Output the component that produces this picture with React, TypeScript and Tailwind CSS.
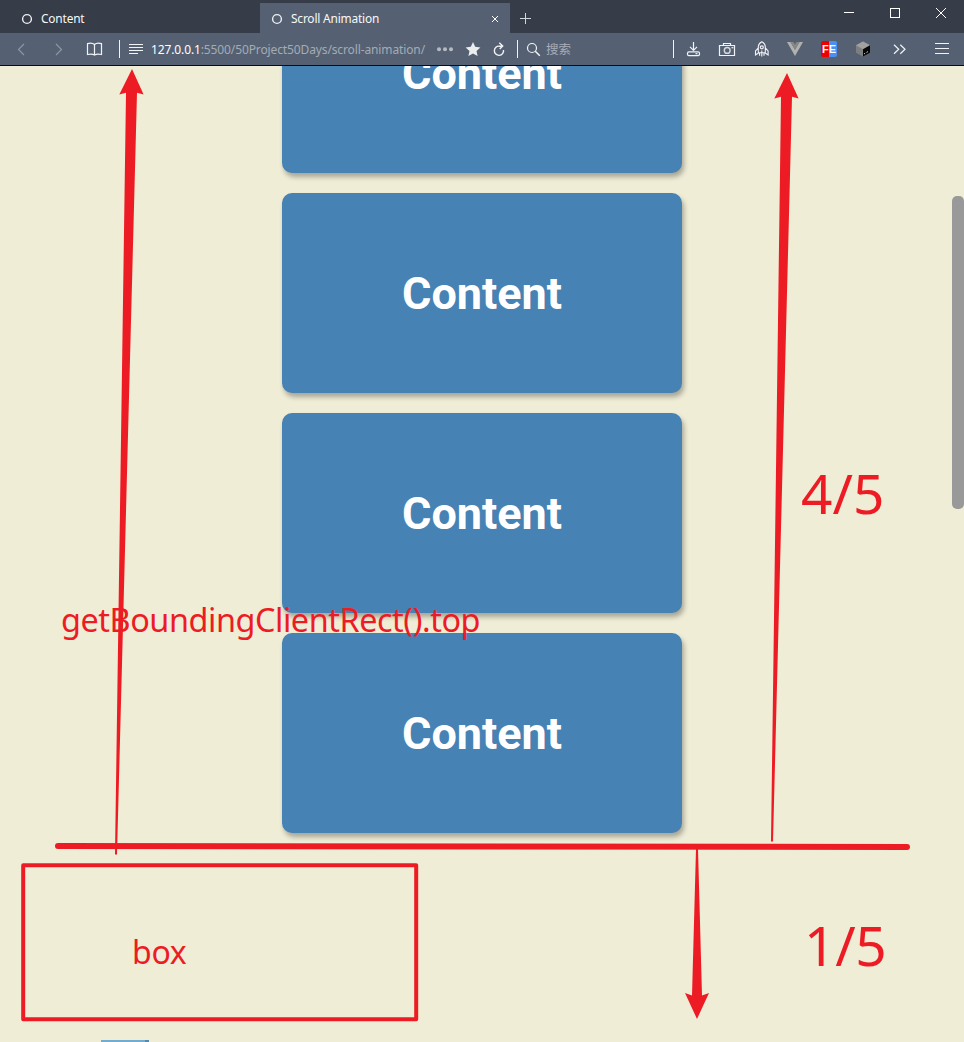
import React from "react";

const CARDS = ["Content", "Content", "Content", "Content"];

function Glyph({ w, className = "", children }: { w: number; className?: string; children: React.ReactNode }) {
  return (
    <svg
      width={w}
      height={32}
      viewBox={`0 0 ${w} 32`}
      fill="none"
      stroke="#f2f3f5"
      strokeWidth={1.2}
      className={`block shrink-0 ${className}`}
    >
      {children}
    </svg>
  );
}

function Ring() {
  return (
    <svg width={12} height={12} viewBox="0 0 12 12" className="block shrink-0">
      <circle cx={6} cy={6} r={4.4} fill="none" stroke="#eef0f2" strokeWidth={1.4} />
    </svg>
  );
}

function TabStrip() {
  return (
    <header className="flex h-[33px] shrink-0 bg-[#363c48] text-[11.9px] tracking-[-0.18px] text-[#f7f8f8]">
      <div className="mt-[3px] flex w-[260px] items-center gap-[8px] pt-[2px] pl-[21px]">
        <Ring />
        <span className="whitespace-nowrap">Content</span>
      </div>
      <div className="mt-[3px] flex w-[250px] items-center bg-[#556173] pt-[2px] pl-[11px]">
        <Ring />
        <span className="ml-[8px] whitespace-nowrap">Scroll Animation</span>
        <svg width={8} height={8} viewBox="0 0 8 8" className="mr-[11px] ml-auto block" stroke="#fff" strokeWidth={1}>
          <path d="M1 1 7 7M7 1 1 7" />
        </svg>
      </div>
      <svg width={32} height={33} viewBox="0 0 32 33" className="block" stroke="#d3d6da" strokeWidth={1}>
        <path d="M10 18.5H21M15.5 13V24" />
      </svg>
      <svg width={138} height={33} viewBox="0 0 138 33" className="ml-auto block" fill="none" stroke="#fff" strokeWidth={1}>
        <path d="M18 12.5H28" />
        <rect x={64.5} y={8.5} width={9} height={9} />
        <path d="m110 8 10 10M120 8l-10 10" />
      </svg>
    </header>
  );
}

function Toolbar() {
  return (
    <nav className="flex h-[33px] shrink-0 items-start border-b border-[#0c0c0d] bg-[#556173]">
      <Glyph w={40}>
        <path d="m24 11-5.5 5.5L24 22" stroke="#8e96a2" />
      </Glyph>
      <Glyph w={40}>
        <path d="m16 11 5.5 5.5L16 22" stroke="#8e96a2" />
      </Glyph>
      <Glyph w={45}>
        <path d="M14.5 22V11.5Q12 9.3 7.5 10.6V21.5Q12 20.5 14.5 22Q17 20.5 21.5 21.5V10.6Q17 9.3 14.5 11.5" />
        <path d="M39.5 7V25" strokeWidth={1} />
      </Glyph>
      <Glyph w={26}>
        <path d="M4 11.5H18M4 14.5H18M4 17.5H18M4 20.5H13" strokeWidth={1} />
      </Glyph>
      <div className="flex h-[32px] w-[282px] shrink-0 items-center pt-[2px] text-[12px] tracking-[-0.12px] whitespace-nowrap text-[#a4abb4]">
        <span>
          <span className="text-white">127.0.0.1</span>:5500/50Project50Days/scroll-animation/
        </span>
      </div>
      <Glyph w={27}>
        <g fill="#b5bac1" stroke="none">
          <circle cx={6} cy={16.3} r={2} />
          <circle cx={12} cy={16.3} r={2} />
          <circle cx={18} cy={16.3} r={2} />
        </g>
      </Glyph>
      <Glyph w={30}>
        <path
          d="m13 9 2.2 4.8 5.2.6-3.9 3.5 1.1 5.2-4.6-2.6-4.6 2.6 1.1-5.2-3.9-3.5 5.2-.6Z"
          fill="#eceded"
          stroke="none"
        />
      </Glyph>
      <Glyph w={32}>
        <path d="M12.5 13.2H9.5A4.6 4.6 0 1 0 13.5 17M9.3 9.7l3.4 3.4-3 3" strokeWidth={1.4} />
        <path d="M27.5 7V25" strokeWidth={1} />
      </Glyph>
      <Glyph w={24}>
        <circle cx={10} cy={15} r={4.5} />
        <path d="m13.3 18.3 4.5 4.5" strokeWidth={1.5} />
      </Glyph>
      <div className="flex h-[32px] w-[122px] shrink-0 items-center pt-[2px] text-[12.5px] text-[#a7adb7]">搜索</div>
      <Glyph w={14}>
        <path d="M5.5 7V25" strokeWidth={1} />
      </Glyph>
      <Glyph w={32}>
        <path d="M11.5 9V17M8 13.8l3.5 3.5 3.5-3.5" />
        <rect x={5.5} y={18.8} width={12} height={3.8} rx={1.4} />
        <path d="M13.5 20.7h2" />
      </Glyph>
      <Glyph w={36}>
        <path d="M5.5 12.5h15v10h-15ZM9.5 12V10.5h7V12" />
        <circle cx={13.2} cy={17.4} r={2.9} strokeWidth={1.4} stroke="#d5d9df" />
        <path d="M17.5 14.7h1.8" />
      </Glyph>
      <Glyph w={33}>
        <path d="M8.3 19.8V13.5q.2-2.8 3.5-4.7 3.3 1.9 3.5 4.7v6.3ZM8.3 14.8 5.5 18v4l3.3-2.2M15.3 14.8 18.1 18v4l-3.3-2.2M9.6 20v2.7M14 20v2.7M11.8 17.5v6" strokeWidth={1.1} />
        <circle cx={11.8} cy={14.3} r={1.5} />
      </Glyph>
      <Glyph w={36}>
        <path d="M4 9h3.5L12 16.7 16.5 9H20L12 23Z" fill="#b1b1b0" stroke="none" />
        <path d="M7.5 9h3L12 11.7 13.5 9h3L12 16.7Z" fill="#868888" stroke="none" />
      </Glyph>
      <span className="mt-[8px] ml-[2px] flex h-[16px] w-[16px] shrink-0 items-center justify-center rounded-[2px] bg-linear-to-r from-[#ed0000] from-50% to-[#4a8ff3] to-50% font-['Liberation_Sans',sans-serif] text-[11px] leading-[16px] font-bold text-white">
        FE
      </span>
      <Glyph w={49} className="ml-[14px]">
        <g stroke="none">
          <path d="m12 8.5 7 3.8v7.4L12 23.5l-7-3.8v-7.4Z" fill="#7d7f7f" />
          <path d="m12 8.5 7 3.8-7 4-7-4Z" fill="#a1a19f" />
          <path d="m12 16.3 7-4v7.4l-7 3.8Z" fill="#080808" />
        </g>
        <path d="m13.2 20.8.9-.5M15.6 19.4l1.2-.7" strokeWidth={1} />
      </Glyph>
      <Glyph w={30} className="-ml-[9px]">
        <path d="m3 11.8 4.7 4.5L3 20.8M9.3 11.8l4.7 4.5-4.7 4.5" />
      </Glyph>
      <Glyph w={43}>
        <path d="M14 10.5H28M14 15.5H28M14 20.5H28" strokeWidth={1} />
      </Glyph>
    </nav>
  );
}

function Annotations() {
  return (
    <div className="pointer-events-none absolute inset-0 text-[#ed1c24]">
      <svg width={964} height={1042} viewBox="0 0 964 1042" className="absolute inset-0" fill="#ed1c24">
        <path d="M132 69 143.6 94.6 137 92.8 117 854.5H115L126 92.8 119.3 94.6Z" />
        <path d="M787 73 798.6 98.6 792 96.8 773 841.5H771L781 96.8 774.3 98.6Z" />
        <path d="M697 1019 685 993 692 995.5 696 849H698L702 995.5 709 993Z" />
        <path d="M58 846 907 847" stroke="#ed1c24" strokeWidth={6} strokeLinecap="round" />
        <rect x={23.2} y={865.2} width={393} height={154} fill="none" stroke="#ed1c24" strokeWidth={4} strokeLinejoin="round" />
      </svg>
      <span className="absolute top-[596px] left-[61px] text-[32.4px] leading-[46px] tracking-[-0.44px] whitespace-nowrap">
        getBoundingClientRect().top
      </span>
      <span className="absolute top-[929px] left-[132px] text-[32px] leading-[46px] tracking-[-0.3px]">box</span>
      <span className="absolute top-[453px] left-[801px] text-[55px] leading-[80px]">4/5</span>
      <span className="absolute top-[905px] left-[804px] text-[55px] leading-[80px] tracking-[-0.3px]">1/5</span>
    </div>
  );
}

export default function App() {
  return (
    <div className="relative flex h-[1042px] w-[964px] flex-col overflow-hidden bg-[#efedd6] font-['Noto_Sans','Noto_Sans_CJK_SC',sans-serif]">
      <TabStrip />
      <Toolbar />
      <main className="relative flex min-h-0 flex-1 justify-center overflow-hidden">
        <div className="-mt-[93px] flex flex-col gap-5">
          {CARDS.map((label, i) => (
            <section
              key={i}
              className="flex h-[200px] w-[400px] shrink-0 items-center justify-center rounded-[10px] bg-[#4682b4] shadow-[2px_4px_5px_rgba(0,0,0,0.3)]"
            >
              <h2 className="font-['Roboto',sans-serif] text-[45px] leading-none font-bold text-white">{label}</h2>
            </section>
          ))}
        </div>
        <div className="absolute top-[130px] right-0 h-[313px] w-[12px] rounded-[5px] bg-[#999]" />
        <div className="absolute bottom-0 left-[101px] h-[2px] w-[48px] border-r-4 border-[#5789aa] bg-[#72acd1]" />
      </main>
      <Annotations />
    </div>
  );
}
